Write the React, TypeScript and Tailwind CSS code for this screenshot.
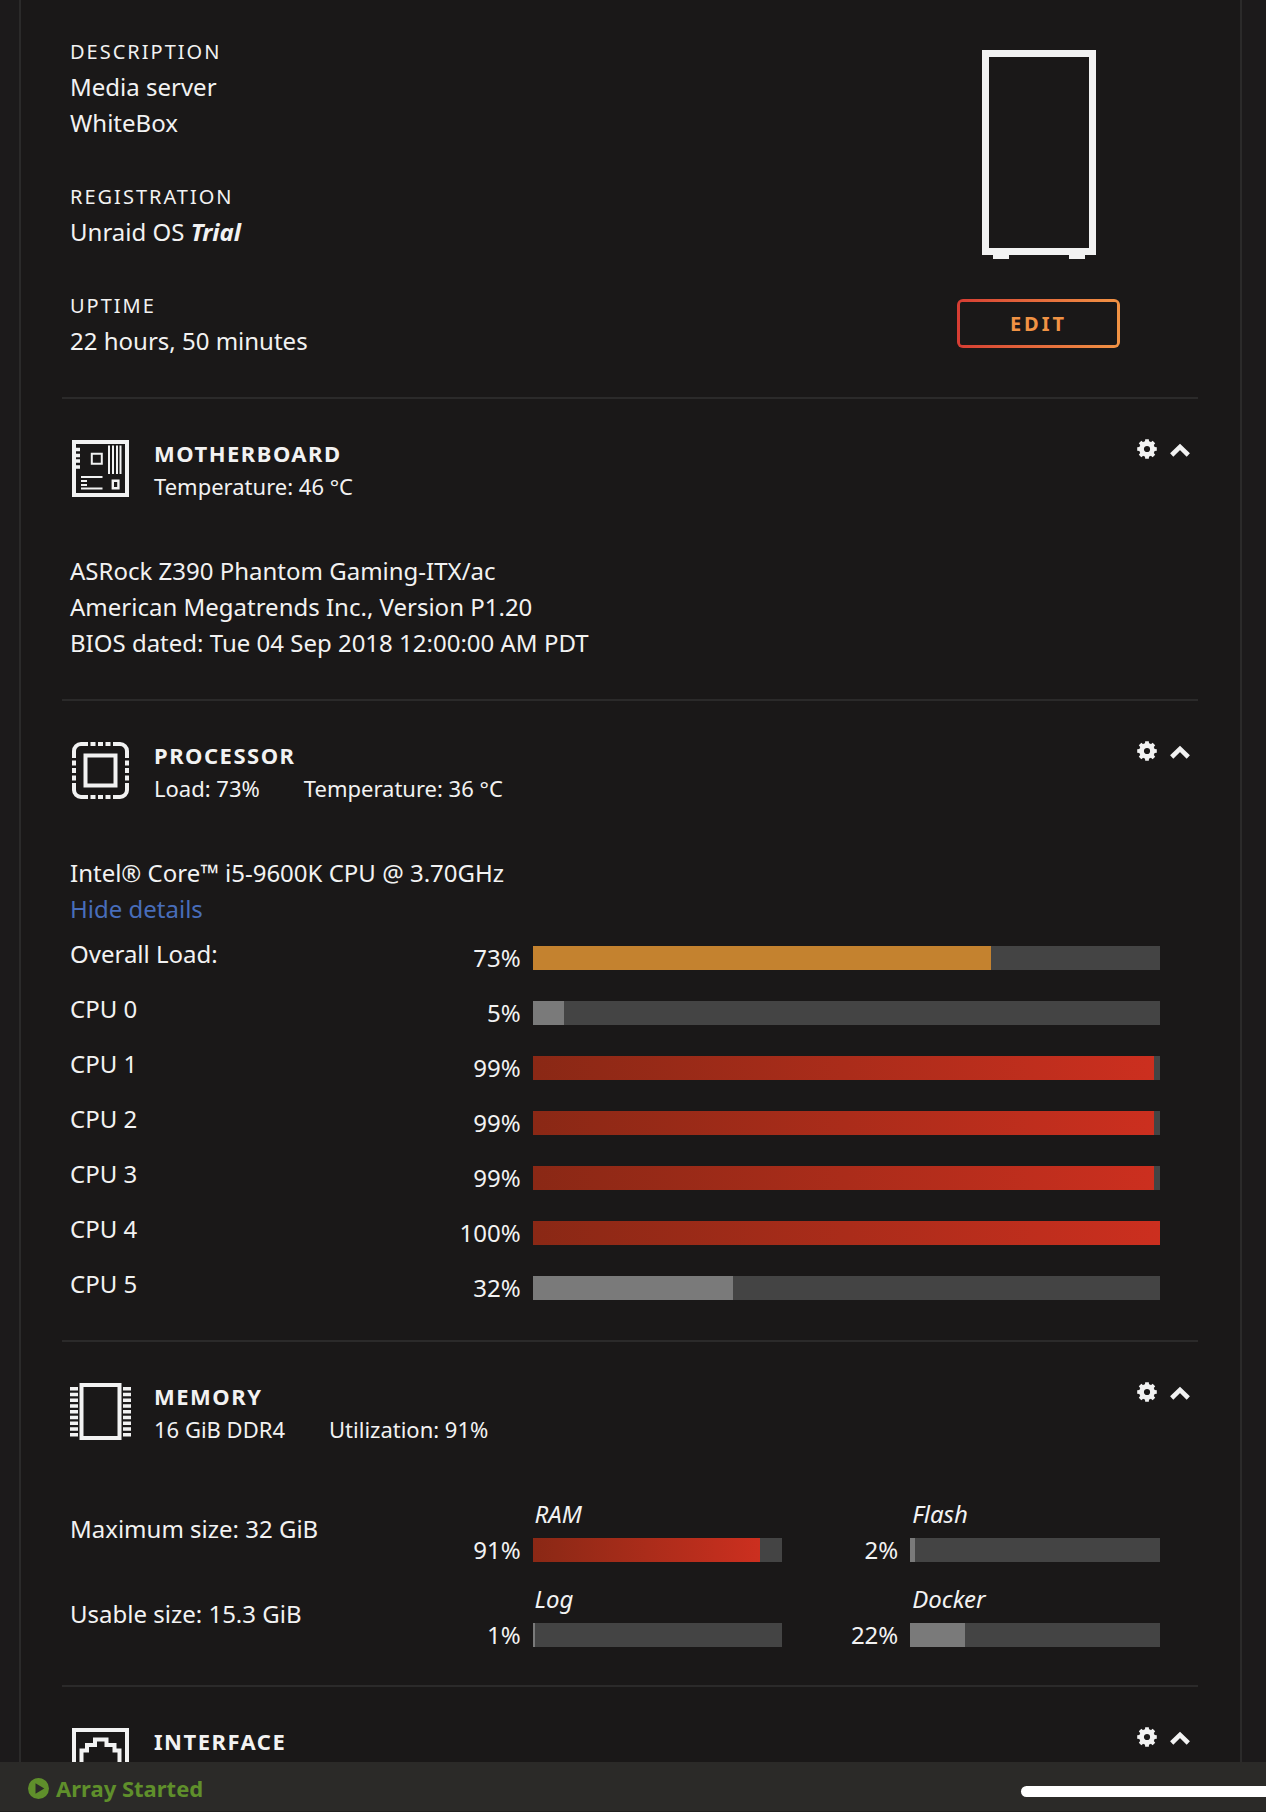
import type { ReactNode } from "react";

type Tone = "gray" | "orange" | "red";

const toneClass: Record<Tone, string> = {
  gray: "bg-[#7a7a7a]",
  orange: "bg-[#c4822f]",
  red: "bg-linear-to-r from-[#8a2815] to-[#cc2f1f]",
};

const cores: { name: string; load: number; tone: Tone }[] = [
  { name: "Overall Load:", load: 73, tone: "orange" },
  { name: "CPU 0", load: 5, tone: "gray" },
  { name: "CPU 1", load: 99, tone: "red" },
  { name: "CPU 2", load: 99, tone: "red" },
  { name: "CPU 3", load: 99, tone: "red" },
  { name: "CPU 4", load: 100, tone: "red" },
  { name: "CPU 5", load: 32, tone: "gray" },
];

const memory: {
  label: string;
  meters: { name: string; load: number; tone: Tone }[];
}[] = [
  {
    label: "Maximum size: 32 GiB",
    meters: [
      { name: "RAM", load: 91, tone: "red" },
      { name: "Flash", load: 2, tone: "gray" },
    ],
  },
  {
    label: "Usable size: 15.3 GiB",
    meters: [
      { name: "Log", load: 1, tone: "gray" },
      { name: "Docker", load: 22, tone: "gray" },
    ],
  },
];

function Meter({ load, tone, name }: { load: number; tone: Tone; name: string }) {
  return (
    <div className="flex min-w-0 flex-1 items-center gap-3">
      <span className="w-20 shrink-0 text-right">{load}%</span>
      <div
        role="progressbar"
        aria-label={name}
        aria-valuenow={load}
        aria-valuemin={0}
        aria-valuemax={100}
        className="h-6 flex-1 bg-[#444444]"
      >
        <div className={`h-full ${toneClass[tone]}`} style={{ width: `${load}%` }} />
      </div>
    </div>
  );
}

function GearIcon() {
  return (
    <svg viewBox="0 0 20 20" className="size-5" fill="currentColor" aria-hidden="true">
      {[0, 45, 90, 135].map((angle) => (
        <path
          key={angle}
          transform={`rotate(${angle} 10 10)`}
          d="M8.2 0.2h3.6l0.5 4.6h-4.6zM8.2 19.8h3.6l0.5-4.6h-4.6z"
        />
      ))}
      <circle cx="10" cy="10" r="5.5" fill="none" stroke="currentColor" strokeWidth="4.8" />
    </svg>
  );
}

function ChevronIcon() {
  return (
    <svg viewBox="0 0 20 20" className="size-5" aria-hidden="true">
      <path
        d="M1.700 16L10 7.900l8.300 8.100"
        fill="none"
        stroke="currentColor"
        strokeWidth="4.600"
      />
    </svg>
  );
}

function MotherboardIcon() {
  return (
    <svg viewBox="0 0 57 57" className="size-[57px]" fill="none" stroke="currentColor" aria-hidden="true">
      <path d="M2 2h53v53H2z" strokeWidth="4" />
      <path d="M4 9.5h4M4 15.5h4M4 21h4M4 27h4" strokeWidth="3.4" />
      <path d="M19.8 13.8h10v10h-10z" strokeWidth="2" />
      <path d="M37 5.5v28.500M41 5.5v28.500M45 5.5v28.500M48.500 5.500v28.500" strokeWidth="2" />
      <path d="M9 37h21.500M9 41h6M9 45h6M9 48.500h21.500" strokeWidth="2" />
      <path d="M40.800 40.800h5.600v7.400h-5.600z" strokeWidth="2.400" />
    </svg>
  );
}

function ProcessorIcon() {
  return (
    <svg viewBox="0 0 57 57" className="size-[57px]" fill="none" stroke="currentColor" strokeWidth="4" aria-hidden="true">
      <path d="M2 16V9a7 7 0 0 1 7-7h7M41 2h7a7 7 0 0 1 7 7v7M55 41v7a7 7 0 0 1-7 7h-7M16 55H9a7 7 0 0 1-7-7v-7" />
      <path d="M18.500 2h5M26 2h5M33.500 2h5M18.500 55h5M26 55h5M33.500 55h5M2 18.500v5M2 26v5M2 33.500v5M55 18.500v5M55 26v5M55 33.500v5" />
      <path d="M13.500 13.500h30v30h-30z" />
    </svg>
  );
}

function MemoryIcon() {
  return (
    <svg viewBox="0 0 61 57" className="-mx-0.5 h-[57px] w-[61px]" fill="none" stroke="currentColor" strokeWidth="4" aria-hidden="true">
      <path d="M11.500 2h38v53h-38z" />
      <path d="M4 4v50M57 4v50" strokeWidth="8" strokeDasharray="3.500 2.250" />
    </svg>
  );
}

function InterfaceIcon() {
  return (
    <svg viewBox="0 0 57 57" className="size-[57px]" fill="none" stroke="currentColor" strokeWidth="4" aria-hidden="true">
      <path d="M2 2h53v53H2z" />
      <path d="M9.500 47V22.500h5.500v-5.500h8v-5.500h11.500v5.500h8v5.500h5v24.500z" />
    </svg>
  );
}

function ServerIcon() {
  return (
    <svg viewBox="0 0 114 209" className="h-[209px] w-[114px]" aria-hidden="true">
      <path d="M3.500 3.500h107v198h-107z" fill="none" stroke="currentColor" strokeWidth="7" />
      <path d="M11 205h16v4H11zM87 205h16v4H87z" fill="currentColor" />
    </svg>
  );
}

function Section({
  icon,
  title,
  details,
  padding = "pb-[38px]",
  children,
}: {
  icon: ReactNode;
  title: string;
  details?: string[];
  padding?: string;
  children?: ReactNode;
}) {
  return (
    <section className={`border-t-2 border-[#2b2a2a] pt-[38px] ${padding}`}>
      <header className="flex items-start pl-[10px] pr-2">
        <div className="mr-[25px] mt-[3px] shrink-0">{icon}</div>
        <div className="flex-1 text-[22px] leading-[33px]">
          <h2 className="font-bold uppercase tracking-[1.5px]">{title}</h2>
          <p className="flex gap-11">
            {details?.map((detail) => (
              <span key={detail}>{detail}</span>
            ))}
          </p>
        </div>
        <div className="mt-0.5 flex gap-[13px]">
          <button type="button" aria-label={`${title} settings`}>
            <GearIcon />
          </button>
          <button type="button" aria-label={`Collapse ${title}`}>
            <ChevronIcon />
          </button>
        </div>
      </header>
      {children && <div className="mt-[50px] pl-2 pr-[38px]">{children}</div>}
    </section>
  );
}

function Fact({ label, children }: { label: string; children: ReactNode }) {
  return (
    <div>
      <dt className="text-xl leading-[34px] uppercase tracking-widest">{label}</dt>
      <dd>{children}</dd>
    </div>
  );
}

export default function App() {
  return (
    <div className="flex h-screen flex-col bg-[#1c1a1b] font-['Noto_Sans',sans-serif] text-2xl leading-9 text-[#f2f2f2]">
      <main className="min-h-0 flex-1 overflow-hidden pl-[19px] pr-6">
        <div className="min-h-full border-x-2 border-[#2b2a2a] bg-[#1a1818] pl-[41px] pr-[42px]">
          <div className="flex justify-between pb-[38px] pl-2 pr-[38px] pt-[35px]">
            <dl className="flex flex-col gap-[39px]">
              <Fact label="Description">
                Media server
                <br />
                WhiteBox
              </Fact>
              <Fact label="Registration">
                Unraid OS <strong className="italic">Trial</strong>
              </Fact>
              <Fact label="Uptime">22 hours, 50 minutes</Fact>
            </dl>
            <div className="mt-[15px] flex w-[243px] flex-col items-center gap-10">
              <ServerIcon />
              <button
                type="button"
                className="rounded-md bg-linear-to-r from-[#d63c33] to-[#f29344] p-[3px]"
              >
                <span className="flex h-[43px] w-[157px] items-center justify-center rounded-xs bg-[#1a1818] text-xl font-bold uppercase tracking-[3px] text-[#f09244]">
                  Edit
                </span>
              </button>
            </div>
          </div>

          <Section icon={<MotherboardIcon />} title="Motherboard" details={["Temperature: 46 °C"]}>
            <p>ASRock Z390 Phantom Gaming-ITX/ac</p>
            <p>American Megatrends Inc., Version P1.20</p>
            <p>BIOS dated: Tue 04 Sep 2018 12:00:00 AM PDT</p>
          </Section>

          <Section
            icon={<ProcessorIcon />}
            title="Processor"
            details={["Load: 73%", "Temperature: 36 °C"]}
            padding="pb-[34px]"
          >
            <p>Intel® Core™ i5-9600K CPU @ 3.70GHz</p>
            <p>
              <a href="#details" className="text-[#486dba]">
                Hide details
              </a>
            </p>
            <div className="mt-[9px] flex flex-col gap-[15px]">
              {cores.map((core) => (
                <div key={core.name} className="flex">
                  <span className="w-[34%] shrink-0">{core.name}</span>
                  <div className="flex flex-1 pt-1">
                    <Meter {...core} />
                  </div>
                </div>
              ))}
            </div>
          </Section>

          <Section
            icon={<MemoryIcon />}
            title="Memory"
            details={["16 GiB DDR4", "Utilization: 91%"]}
            padding="pb-8"
          >
            <div className="flex flex-col gap-[13px]">
              {memory.map((row) => (
                <div key={row.label} className="flex">
                  <span className="w-[34%] shrink-0 pt-[15px]">{row.label}</span>
                  <div className="flex flex-1 gap-9">
                    {row.meters.map((meter) => (
                      <div key={meter.name} className="flex flex-1 flex-col">
                        <span className="pl-[94px] italic">{meter.name}</span>
                        <Meter {...meter} />
                      </div>
                    ))}
                  </div>
                </div>
              ))}
            </div>
          </Section>

          <Section icon={<InterfaceIcon />} title="Interface" padding="pb-0" />
        </div>
      </main>

      <footer className="flex h-[50px] shrink-0 items-center justify-between border-b border-[#201f1e] bg-[#2b2a28] pl-7 pt-[3px]">
        <div className="flex items-center gap-[7px] text-[22px] font-bold text-[#5f8f2b]">
          <svg viewBox="0 0 21 21" className="size-[21px]" aria-hidden="true">
            <circle cx="10.500" cy="10.500" r="10.500" fill="currentColor" />
            <path d="M7.500 5.200v10.600l8.800-5.300z" fill="#2b2a28" />
          </svg>
          <span>Array Started</span>
        </div>
        <div className="mt-[7px] h-[11px] w-[245px] rounded-l-full bg-white" />
      </footer>
    </div>
  );
}
